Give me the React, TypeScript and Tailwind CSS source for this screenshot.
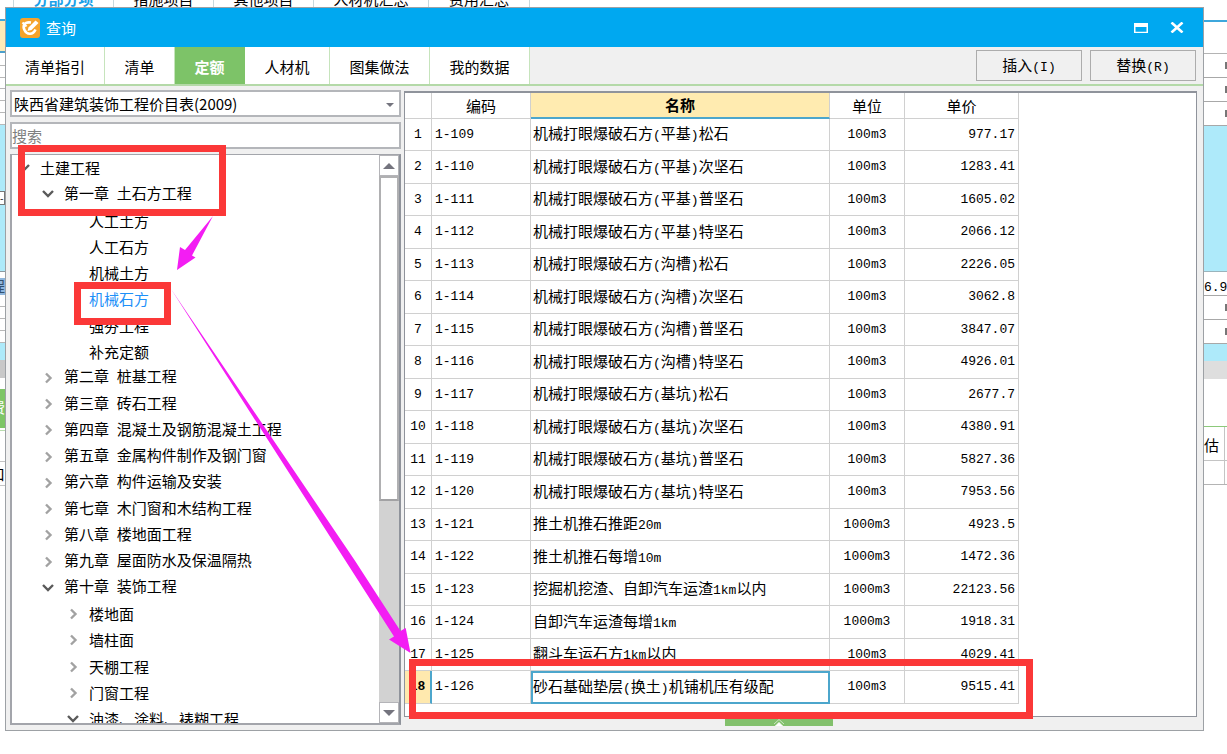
import React from "react";

const CJK = "font-['Noto_Sans_CJK_SC',sans-serif]";

/** Renders Chinese text with its ASCII runs in a half-width monospace face. */
function Mixed({ text }: { text: string }) {
  return (
    <>
      {text.split(/([\x20-\x7e]+)/).map((part, i) =>
        i % 2 === 1 ? (
          <span key={i} className="whitespace-pre font-['Liberation_Mono',monospace] text-[13px]">
            {part}
          </span>
        ) : (
          part
        ),
      )}
    </>
  );
}

type Band = { cls: string; content?: React.ReactNode };

const leftBands: Band[] = [
  { cls: "h-[14px] border-b-2 border-[#3da7dc]" },
  { cls: "h-[32px] border-b-2 border-[#4a9fcc] bg-[#fdebb8]" },
  { cls: "h-[13px] border-b border-[#b8b8b8]" },
  { cls: "h-[12px] border-b border-[#b8b8b8]" },
  { cls: "h-[11px] border-b border-[#b8b8b8]" },
  { cls: "h-[12px] border-b border-[#b8b8b8]" },
  { cls: "h-[12px] border-b border-[#b8b8b8]" },
  { cls: "h-[12px] border-b border-[#b8b8b8]" },
  { cls: "h-[66px] bg-[#aeeafa]" },
  { cls: "h-[14px] border-y border-r border-[#777] bg-white text-[10px] leading-3", content: "-" },
  { cls: "h-[67px] border-b border-[#8d9aa0] bg-[#aeeafa]" },
  { cls: "h-[6px]" },
  { cls: "h-[17px] bg-[#8eb6dd] pl-px text-[15px] leading-4 text-[#33506e]", content: <Right text="程" /> },
  { cls: "h-[12px] border-b border-[#b8b8b8]" },
  { cls: "h-[12px] border-b border-[#b8b8b8]" },
  { cls: "h-[12px] border-b border-[#b8b8b8]" },
  { cls: "h-[12px] border-b border-[#b8b8b8]" },
  { cls: "h-[17px] bg-[#aeeafa]" },
  { cls: "h-[18px] bg-[#c8c8c8]" },
  { cls: "h-[11px]" },
  { cls: "h-[39px] bg-[#7dc566] text-[15px] leading-9 text-white", content: <Right text="费" /> },
  { cls: "h-[3px] border-b border-[#b9dcae]" },
  { cls: "h-[31px] border-b border-[#c4c4c4]" },
  { cls: "h-[24px] border-b border-[#c4c4c4] text-[15px] leading-6", content: <Right text="口" /> },
];

const rightBands: Band[] = [
  { cls: "h-[15px] border-b-2 border-[#3da7dc]" },
  { cls: "h-[32px] border-b border-[#b4b4b4]" },
  { cls: "h-[24px] border-b border-[#a8a8a8]", content: <Tick /> },
  { cls: "h-[24px] border-b border-[#a8a8a8]", content: <Tick /> },
  { cls: "h-[24px] border-b border-[#a8a8a8]", content: <Tick /> },
  { cls: "h-[146px] border-b border-[#9ab4bc] bg-[#aeeafa]" },
  { cls: "h-[24px] border-b border-[#a8a8a8] leading-6", content: <Mixed text="6.96" /> },
  { cls: "h-[24px] border-b border-[#a8a8a8]", content: <Tick /> },
  { cls: "h-[24px] border-b border-[#a8a8a8]", content: <Tick /> },
  { cls: "h-[17px] bg-[#aeeafa]" },
  { cls: "h-[18px] bg-[#dedede]" },
  { cls: "h-[48px] border-b border-[#8cc97a]" },
  { cls: "h-[34px] border-b border-[#c4c4c4] pr-[2px] text-[15px] leading-9", content: <div className="h-full border-r border-[#c4c4c4]">估</div> },
  { cls: "h-[24px] border-b border-[#b4b4b4] pr-[2px]", content: <div className="h-full border-r border-[#c4c4c4]" /> },
];

/** A glyph whose right part alone shows in a narrow strip. */
function Right({ text }: { text: string }) {
  return <div className="flex justify-end">{text}</div>;
}

function Tick() {
  return <div className="ml-auto mt-2 h-[7px] w-[2px] bg-[#777]" />;
}

function Strip({ bands, side }: { bands: Band[]; side: string }) {
  return (
    <div className={`shrink-0 overflow-hidden ${side}`}>
      {bands.map((b, i) => (
        <div key={i} className={`overflow-hidden ${b.cls}`}>
          {b.content}
        </div>
      ))}
    </div>
  );
}

const backTabs = [
  { t: "分部分项", w: "w-[100px]", active: true },
  { t: "措施项目", w: "w-[100px]" },
  { t: "其他项目", w: "w-[100px]" },
  { t: "人材机汇总", w: "w-[115px]" },
  { t: "费用汇总", w: "w-[101px]" },
];

const tabs = [
  { t: "清单指引", w: "w-[99px]" },
  { t: "清单", w: "w-[70px]" },
  { t: "定额", w: "w-[70px]", active: true },
  { t: "人材机", w: "w-[85px]" },
  { t: "图集做法", w: "w-[100px]" },
  { t: "我的数据", w: "w-[100px]" },
];

type Node = { t: string; level: 0 | 1 | 2; state?: "open" | "closed"; selected?: boolean };
const tree: Node[] = [
  { t: "土建工程", level: 0, state: "open" },
  { t: "第一章 土石方工程", level: 1, state: "open" },
  { t: "人工土方", level: 2 },
  { t: "人工石方", level: 2 },
  { t: "机械土方", level: 2 },
  { t: "机械石方", level: 2, selected: true },
  { t: "强夯工程", level: 2 },
  { t: "补充定额", level: 2 },
  { t: "第二章 桩基工程", level: 1, state: "closed" },
  { t: "第三章 砖石工程", level: 1, state: "closed" },
  { t: "第四章 混凝土及钢筋混凝土工程", level: 1, state: "closed" },
  { t: "第五章 金属构件制作及钢门窗", level: 1, state: "closed" },
  { t: "第六章 构件运输及安装", level: 1, state: "closed" },
  { t: "第七章 木门窗和木结构工程", level: 1, state: "closed" },
  { t: "第八章 楼地面工程", level: 1, state: "closed" },
  { t: "第九章 屋面防水及保温隔热", level: 1, state: "closed" },
  { t: "第十章 装饰工程", level: 1, state: "open" },
  { t: "楼地面", level: 2, state: "closed" },
  { t: "墙柱面", level: 2, state: "closed" },
  { t: "天棚工程", level: 2, state: "closed" },
  { t: "门窗工程", level: 2, state: "closed" },
  { t: "油漆、涂料、裱糊工程", level: 2, state: "open" },
];
const indent = { 0: "pl-[6px]", 1: "pl-[30px]", 2: "pl-[55px]" };

const rows: [string, string, string, string][] = [
  ["1-109", "机械打眼爆破石方(平基)松石", "100m3", "977.17"],
  ["1-110", "机械打眼爆破石方(平基)次坚石", "100m3", "1283.41"],
  ["1-111", "机械打眼爆破石方(平基)普坚石", "100m3", "1605.02"],
  ["1-112", "机械打眼爆破石方(平基)特坚石", "100m3", "2066.12"],
  ["1-113", "机械打眼爆破石方(沟槽)松石", "100m3", "2226.05"],
  ["1-114", "机械打眼爆破石方(沟槽)次坚石", "100m3", "3062.8"],
  ["1-115", "机械打眼爆破石方(沟槽)普坚石", "100m3", "3847.07"],
  ["1-116", "机械打眼爆破石方(沟槽)特坚石", "100m3", "4926.01"],
  ["1-117", "机械打眼爆破石方(基坑)松石", "100m3", "2677.7"],
  ["1-118", "机械打眼爆破石方(基坑)次坚石", "100m3", "4380.91"],
  ["1-119", "机械打眼爆破石方(基坑)普坚石", "100m3", "5827.36"],
  ["1-120", "机械打眼爆破石方(基坑)特坚石", "100m3", "7953.56"],
  ["1-121", "推土机推石推距20m", "1000m3", "4923.5"],
  ["1-122", "推土机推石每增10m", "1000m3", "1472.36"],
  ["1-123", "挖掘机挖渣、自卸汽车运渣1km以内", "1000m3", "22123.56"],
  ["1-124", "自卸汽车运渣每增1km", "1000m3", "1918.31"],
  ["1-125", "翻斗车运石方1km以内", "100m3", "4029.41"],
  ["1-126", "砂石基础垫层(换土)机铺机压有级配", "100m3", "9515.41"],
];

function Chevron({ state }: { state: "open" | "closed" }) {
  return (
    <svg viewBox="0 0 12 12" className="size-3" fill="none" strokeWidth="2.4">
      {state === "open" ? (
        <path d="M1 3 L6 8 L11 3" stroke="#5a5a5a" />
      ) : (
        <path d="M4 1.500 L8.500 6 L4 10.500" stroke="#a2a2a2" />
      )}
    </svg>
  );
}

function TreePanel() {
  return (
    <div className="flex h-[571px] overflow-hidden border-2 border-t border-[#a3a5ab] border-r-[#8f939b] bg-white">
      <ul role="tree" aria-label="定额章节" className="flex h-[577px] min-w-0 flex-1 flex-col overflow-hidden">
        {tree.map((n) => (
          <li key={n.t} role="treeitem" aria-selected={!!n.selected} className={`flex flex-1 items-center whitespace-nowrap text-[15px] leading-5 ${indent[n.level]} ${n.selected ? "text-[#1e90f8]" : ""}`}>
            <span className="w-[22px]">
              {n.state && <Chevron state={n.state} />}
            </span>
            <span>
              <Mixed text={n.t} />
            </span>
          </li>
        ))}
      </ul>
      <div className="flex w-[20px] shrink-0 flex-col bg-[#d2d2d2]">
        <button type="button" aria-label="向上滚动" className="flex h-[21px] items-center justify-center border border-[#b4b4b8] bg-white">
          <svg viewBox="0 0 12 6" className="h-[6px] w-3"><path d="M6 0 L12 6 H0 Z" fill="#74747e" /></svg>
        </button>
        <div className="h-[325px] border-2 border-[#b0b0b2] border-b-[#a2a2a4] bg-white" />
        <button type="button" aria-label="向下滚动" className="mt-auto flex h-[21px] items-center justify-center border border-[#b4b4b8] bg-white">
          <svg viewBox="0 0 12 6" className="h-[6px] w-3"><path d="M0 0 H12 L6 6 Z" fill="#74747e" /></svg>
        </button>
      </div>
    </div>
  );
}

function PriceTable() {
  const cell = "border-b border-r border-[#d0d0d0] p-0";
  const mono = "font-['Liberation_Mono',monospace] text-[13px]";
  return (
    <table className="w-[614px] table-fixed border-separate border-spacing-0 leading-5">
      <colgroup>
        <col className="w-[27px]" />
        <col className="w-[99px]" />
        <col className="w-[299px]" />
        <col className="w-[75px]" />
        <col className="w-[114px]" />
      </colgroup>
      <thead>
        <tr className="h-[26px] text-[15px]">
          <th className={cell} aria-label="序号" />
          <th className={`${cell} font-normal`}>编码</th>
          <th className="border-b-2 border-r border-b-[#4ca6cc] border-r-[#d0d0d0] bg-[#ffebb0] p-0 font-bold">名称</th>
          <th className={`${cell} font-normal`}>单位</th>
          <th className={`${cell} font-normal`}>单价</th>
        </tr>
      </thead>
      <tbody>
        {rows.map(([code, name, unit, price], i) => {
          const current = i === rows.length - 1;
          return (
            <tr key={code} className="h-[32px] even:h-[33px]">
              <td className={`p-0 text-center ${mono} ${current ? "border-b border-r-2 border-b-[#d0d0d0] border-r-[#4ca6cc] bg-[#ffe9ae] font-bold" : "border-b border-r border-[#d0d0d0]"}`}>{i + 1}</td>
              <td className={`${cell} ${mono}`}><span className="pl-[3px]">{code}</span></td>
              <td className={`whitespace-nowrap p-0 text-[15px] ${current ? "border-2 border-[#4ca6cc]" : "border-b border-r border-[#d0d0d0] pl-[2px]"}`}>
                <Mixed text={name} />
              </td>
              <td className={`${cell} ${mono} text-center`}>{unit}</td>
              <td className={`${cell} ${mono} text-right`}><span className="pr-[3px]">{price}</span></td>
            </tr>
          );
        })}
      </tbody>
    </table>
  );
}

function Marks() {
  return (
    <div className="pointer-events-none absolute inset-0">
      <svg className="absolute left-0 top-0 h-[754px] w-[1227px]" viewBox="0 0 1227 754" fill="#f31df3">
        <path d="M213 216 L192 255.500 L195.500 257.500 L177 270 L180 247 L185 250 Z" />
        <path d="M171 289 L354.500 560 L400.500 631 L405.700 628 L410.500 653 L389 639.500 L394 636.500 L345 560 Z" />
      </svg>
      <div className="absolute left-[18px] top-[145px] h-[71px] w-[208px] border-[7px] border-[#fb3838]" />
      <div className="absolute left-[74px] top-[282px] h-[43px] w-[97px] border-[7px] border-[#fb3838]" />
      <div className="absolute left-[409px] top-[659px] h-[60px] w-[624px] border-[7px] border-[#fb3838]" />
    </div>
  );
}

export default function App() {
  return (
    <div className={`relative min-h-screen overflow-hidden bg-white text-black ${CJK}`}>
      <nav className="flex h-[7px] overflow-hidden pl-[13px]">
        {backTabs.map((b) => (
          <button key={b.t} type="button" className={`flex shrink-0 items-end justify-center border-l border-[#c8d8dc] text-[15px] leading-4 ${b.w} ${b.active ? "font-bold text-[#1ba0e8]" : ""}`}>
            {b.t}
          </button>
        ))}
        <span className="border-l border-[#c8d8dc]" />
      </nav>
      <div className="flex items-start">
        <Strip bands={leftBands} side="w-[5px]" />

        <main className="min-w-0 flex-1 border border-[#9da1a5] bg-[#f0f0f0]">
          <header className="flex h-[39px] items-center bg-[#00a8f0] pl-[14px] pr-[19px] text-white">
            <svg viewBox="0 0 20 20" className="size-5">
              <rect width="20" height="20" rx="3" fill="#f5a32b" />
              <path d="M11 4.500 C4 3.500 2.500 8 4.500 12 C6.500 16.500 13 17.500 15.500 11.500" fill="none" stroke="#fff" strokeWidth="2.600" />
              <path d="M2.500 4.500 L6.500 8.500" fill="none" stroke="#fff" strokeWidth="2.200" />
              <path d="M7.500 13 L8.500 9.500 L15.500 2.500 L18.500 5 L11.500 12 Z" fill="#fff" />
            </svg>
            <h1 className="ml-[6px] text-[15px] leading-5">查询</h1>
            <button type="button" aria-label="最大化" className="ml-auto">
              <svg viewBox="0 0 14 10" className="h-[10px] w-[14px]"><path d="M0 0 H14 V10 H0 Z M1.500 4 V8.700 H12.500 V4 Z" fill="#fff" fillRule="evenodd" /></svg>
            </button>
            <button type="button" aria-label="关闭" className="ml-[22px]">
              <svg viewBox="0 0 14 11" className="h-[11px] w-[14px]"><path d="M1.500 0.500 L12.500 10.500 M12.500 0.500 L1.500 10.500" stroke="#fff" strokeWidth="2.600" /></svg>
            </button>
          </header>

          <div className="flex h-[39px] items-stretch border-b-2 border-[#b4d9a8] pr-[7px]">
            {tabs.map((t) => (
              <button key={t.t} type="button" className={`shrink-0 border-r pt-[2px] text-[15px] leading-5 ${t.w} ${t.active ? "border-[#7dc368] bg-[#7dc368] font-bold text-white" : "border-[#c6e4bc] bg-white"}`}>
                {t.t}
              </button>
            ))}
            <div className="ml-auto flex items-center gap-2">
              <button type="button" className="h-[31px] w-[106px] border border-[#acacac] pt-[2px] text-[15px] leading-5"><Mixed text="插入(I)" /></button>
              <button type="button" className="h-[31px] w-[106px] border border-[#acacac] pt-[2px] text-[15px] leading-5"><Mixed text="替换(R)" /></button>
            </div>
          </div>

          <div className="flex items-start gap-[3px] pb-1 pl-1 pr-[6px] pt-1">
            <aside className="flex w-[391px] shrink-0 flex-col gap-[5px]">
              <div className="relative h-[27px]">
                <select aria-label="价目表" className="h-[27px] w-full appearance-none border-2 border-[#b4b6ba] bg-white pl-[2px] text-[15px] leading-5">
                  <option>陕西省建筑装饰工程价目表(2009)</option>
                </select>
                <svg viewBox="0 0 8 4" className="pointer-events-none absolute right-[7px] top-[13px] h-1 w-2"><path d="M0 0 H8 L4 4 Z" fill="#74747e" /></svg>
              </div>
              <input aria-label="搜索" placeholder="搜索" className="h-[27px] border-2 border-[#b4b6ba] bg-white text-[15px] leading-5 placeholder:text-[#808080]" />
              <TreePanel />
            </aside>
            <div className="min-w-0 flex-1">
              <section className="mt-px h-[626px] overflow-hidden border border-t-2 border-[#8f939b] bg-white">
                <PriceTable />
              </section>
              <div className="mt-[2px] flex justify-center pr-11">
                <button type="button" aria-label="展开" className="flex h-[7px] w-[108px] items-center justify-center bg-[#82c06c]">
                  <svg viewBox="0 0 12 7" className="h-[7px] w-3" fill="none" stroke="#fff"><path d="M1 5 L6 0.500 L11 5" opacity=".6" /><path d="M2.500 7 L6 3.500 L9.500 7 Z" fill="#fff" /></svg>
                </button>
              </div>
            </div>
          </div>
        </main>

        <Strip bands={rightBands} side="w-[23px]" />
      </div>
      <Marks />
    </div>
  );
}
